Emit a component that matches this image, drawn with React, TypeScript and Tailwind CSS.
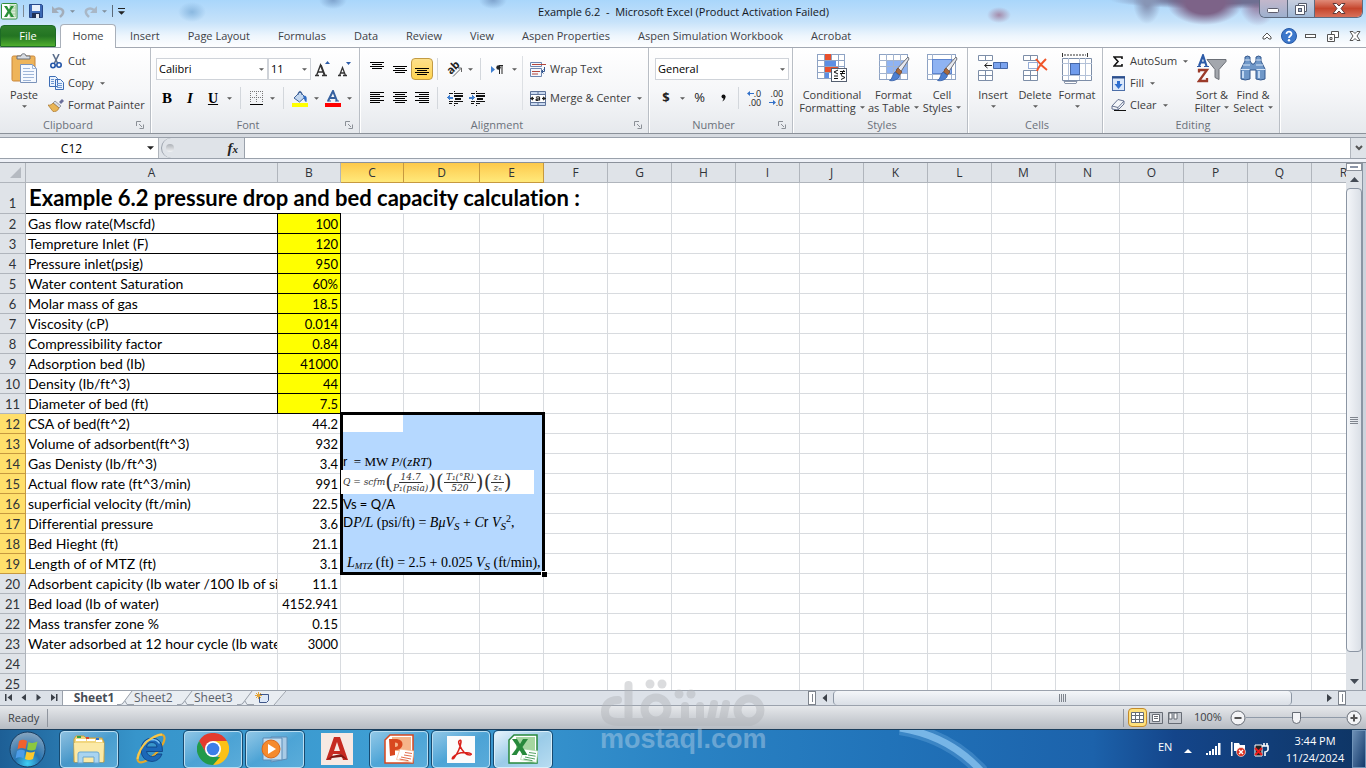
import React from 'react';
import type { ReactNode } from 'react';

const UI = "font-['Open_Sans','Noto_Sans',sans-serif]";
const CELL = "font-['Lato',sans-serif] [font-variant-ligatures:none]";
const SERIF = "font-['Liberation_Serif',serif]";

function Caret({ big = false }: { big?: boolean }) {
  return (
    <svg width={big ? 7 : 5} height={big ? 4 : 3} viewBox="0 0 6 3" className="shrink-0" aria-hidden="true">
      <path d="M0 0H6L3 3Z" fill={big ? '#222' : '#5b5b5b'} />
    </svg>
  );
}

function Launcher() {
  return (
    <svg width="8" height="8" viewBox="0 0 8 8" aria-hidden="true">
      <path d="M.5 5V.5H5M3 3l3 3M7.500 3.500v4h-4" fill="none" stroke="#8b9097" />
    </svg>
  );
}

function Group({ label, width, launcher = false, children }: { label: string; width: string; launcher?: boolean; children: ReactNode }) {
  return (
    <section aria-label={label} className={`${width} flex shrink-0 flex-col border-r border-[#b9bec5] shadow-[1px_0_0_#fff]`}>
      <div className="flex h-[69px]">{children}</div>
      <div className="flex h-4 items-center pr-1.5">
        <span className={`flex-1 text-center text-[#6b717a] ${launcher ? '' : 'pl-2.5'}`}>{label}</span>
        {launcher && (
          <button aria-label={`${label} options`}>
            <Launcher />
          </button>
        )}
      </div>
    </section>
  );
}

function IconButton({ label, className = 'w-5', children }: { label: string; className?: string; children: ReactNode }) {
  return (
    <button aria-label={label} className={`flex h-[22px] shrink-0 items-center justify-center ${className}`}>
      {children}
    </button>
  );
}

function Rule() {
  return <span className="h-[22px] w-px shrink-0 bg-[#d3d7dc]" />;
}

function Combo({ label, value, className }: { label: string; value: string; className: string }) {
  return (
    <div className={`relative shrink-0 ${className}`}>
      <select aria-label={label} defaultValue={value} className="h-[22px] w-full appearance-none border border-[#cfd3d9] bg-white pl-0.5 text-[11px] text-black">
        <option>{value}</option>
      </select>
      <span className="pointer-events-none absolute right-1 top-2.5">
        <Caret />
      </span>
    </div>
  );
}

function Lines({ rows }: { rows: number[][] }) {
  return (
    <svg width="16" height="14" viewBox="0 0 16 14" shapeRendering="crispEdges" aria-hidden="true">
      {rows.map(([x, y, w]) => (
        <rect key={y} x={x} y={y} width={w} height="1" fill="#000" />
      ))}
    </svg>
  );
}

const alignLeft = [[1, 1, 14], [1, 3, 10], [1, 5, 14], [1, 7, 10], [1, 9, 14], [1, 11, 10]];
const alignCenter = [[1, 1, 14], [3, 3, 10], [1, 5, 14], [3, 7, 10], [1, 9, 14], [3, 11, 10]];
const alignRight = [[1, 1, 14], [5, 3, 10], [1, 5, 14], [5, 7, 10], [1, 9, 14], [5, 11, 10]];
const alignTop = [[1, 0, 14], [3, 2, 10], [1, 4, 14], [3, 6, 10]];
const alignMiddle = [[1, 4, 14], [3, 6, 10], [1, 8, 14], [3, 10, 10]];
const alignBottom = [[1, 6, 14], [3, 8, 10], [1, 10, 14], [3, 12, 10]];

function Indent({ flip = false }: { flip?: boolean }) {
  return (
    <svg width="17" height="15" viewBox="0 0 17 15" shapeRendering="crispEdges" aria-hidden="true">
      <g fill="#111">
        <rect x="7" y="0" width="1" height="1" />
        <rect x="2" y="2" width="4" height="1" />
        <rect x="7" y="2" width="9" height="1" />
        <rect x="7" y="4" width="9" height="2" />
        <rect x="8" y="7" width="6" height="2" />
        <rect x="2" y="10" width="4" height="1" />
        <rect x="7" y="10" width="9" height="1" />
        <rect x="2" y="12" width="3" height="1" />
        <rect x="7" y="12" width="4" height="1" />
        <rect x="7" y="14" width="1" height="1" />
      </g>
      <path d={flip ? 'M0 5.500h3v-2L6 6.500 3 9.500v-2H0z' : 'M6 5.500H3v-2L0 6.500l3 3v-2h3z'} fill="#3f7fd0" />
    </svg>
  );
}

function DecimalArrow({ right = false }: { right?: boolean }) {
  return (
    <svg width="7" height="5" viewBox="0 0 7 5" aria-hidden="true">
      <path d={right ? 'M0 2h4V0l3 2.500L4 5V3H0z' : 'M7 2H3V0L0 2.500 3 5V3h4z'} fill="#3270c8" />
    </svg>
  );
}

function ExcelIcon() {
  return (
    <svg width="17" height="17" viewBox="0 0 17 17" aria-hidden="true">
      <rect x=".5" y=".5" width="15.500" height="15.500" rx="1" fill="#fff" stroke="#2f8d3a" />
      <rect x="9" y="2" width="5.500" height="12" fill="#d7ecd5" stroke="#82bb82" strokeWidth=".6" />
      <path d="M9 5h5.500M9 8h5.500M9 11h5.500" stroke="#82bb82" strokeWidth=".6" />
      <path d="M3 3h3l2 3.500L10 3h3L9.500 8.200 13 14h-3L8 10.300 6 14H3l3.500-5.800z" fill="#2a9038" />
    </svg>
  );
}

function Header() {
  return (
    <header className="relative shrink-0 bg-[radial-gradient(ellipse_14px_10px_at_192px_12px,#8ab8e0_0,transparent_100%),radial-gradient(ellipse_14px_9px_at_493px_0px,#7ea3cd_0,transparent_100%),radial-gradient(ellipse_14px_9px_at_333px_0px,#7ea3cd_0,transparent_100%),radial-gradient(ellipse_12px_8px_at_999px_15px,#a58cab_0,transparent_100%),radial-gradient(ellipse_38px_22px_at_1205px_3px,#7d6388_50%,transparent_100%),radial-gradient(ellipse_14px_22px_at_1147px_2px,#8795b5_20%,transparent_100%),radial-gradient(ellipse_110px_9px_at_1220px_0px,#6f6f92_40%,transparent_100%),radial-gradient(ellipse_20px_26px_at_1258px_0px,#94799d_20%,transparent_100%),linear-gradient(180deg,#a9d6fb_0,#c6e2fa_45%,#eef6fd_75%,#fff_100%)]">
      <div className="flex h-[25px] items-start">
        <div className="flex h-[22px] w-[132px] shrink-0 items-center gap-[5px] pl-px">
          <ExcelIcon />
          <span className="h-3 w-px bg-[#7c8894]" />
          <button aria-label="Save">
            <svg width="14" height="14" viewBox="0 0 14 14" aria-hidden="true">
              <path d="M.5.500h12l1 1v12H.5z" fill="#3c69b5" stroke="#28498a" />
              <rect x="3" y="1" width="8" height="6" fill="#e9f1fb" />
              <rect x="3" y="9" width="8" height="5" fill="#1f3156" />
              <rect x="7" y="10" width="3" height="4" fill="#e5ebf3" />
            </svg>
          </button>
          <button aria-label="Undo" className="ml-1 flex items-center gap-1">
            <svg width="14" height="13" viewBox="0 0 14 13" aria-hidden="true">
              <path d="M3 5c4-3 9-1 8 3-.5 2-2 3-3 4" fill="none" stroke="#a3adb9" strokeWidth="2.500" />
              <path d="M0 1v7h7z" fill="#a3adb9" />
            </svg>
            <span className="opacity-60"><Caret /></span>
          </button>
          <button aria-label="Redo" className="ml-1 flex items-center gap-1">
            <svg width="14" height="13" viewBox="0 0 14 13" aria-hidden="true">
              <path d="M10 5c-4-3-9-1-8 3 .5 2 2 3 3 4" fill="none" stroke="#a9b7c6" strokeWidth="2.500" />
              <path d="M13 1v7H6z" fill="#a9b7c6" />
            </svg>
            <span className="opacity-60"><Caret /></span>
          </button>
          <span className="h-3 w-px shrink-0 bg-[#5c6b7a]" />
          <button aria-label="Customize toolbar" className="flex shrink-0 flex-col items-center gap-0.5">
            <span className="h-px w-[7px] bg-[#222]" />
            <Caret big />
          </button>
        </div>
        <h1 className="flex-1 pr-6 pt-1 text-center text-[11px] leading-4 text-[#14181d]">Example 6.2&nbsp; -&nbsp; Microsoft Excel (Product Activation Failed)</h1>
        <div className="mr-[3px] flex h-[18px] shrink-0 overflow-hidden rounded-b-md border border-t-0 border-[#5d6b80]">
          <button aria-label="Minimize" className="flex w-7 items-center justify-center border-r border-[#5d6b80] bg-linear-to-b from-[#c3b7cb] to-[#9db0ce] pt-1">
            <svg width="13" height="5" aria-hidden="true"><rect x=".5" y=".5" width="11" height="4" rx="1" fill="#fff" stroke="#5c5c6c" /></svg>
          </button>
          <button aria-label="Restore" className="flex w-[27px] items-center justify-center border-r border-[#5d6b80] bg-linear-to-b from-[#c8cfdf] to-[#9fb8d6]">
            <svg width="13" height="12" viewBox="0 0 13 12" aria-hidden="true">
              <path d="M3.500 .5h8v8h-8z" fill="#fff" stroke="#555b6b" />
              <path d="M.5 2.500h9v9h-9z" fill="#fff" stroke="#555b6b" />
              <rect x="3.500" y="5.500" width="3" height="3" fill="#9fb1ca" stroke="#555b6b" />
            </svg>
          </button>
          <button aria-label="Close" className="flex w-[47px] items-center justify-center bg-linear-to-b from-[#e08a78] via-[#c5452c] to-[#d8705a]">
            <svg width="14" height="11" viewBox="0 0 14 11" aria-hidden="true">
              <path d="M1 .5h3.500L7 3l2.500-2.500H13L9 5.500l4 5H9.500L7 8l-2.500 2.500H1l4-5z" fill="#fff" stroke="#5f3a3a" />
            </svg>
          </button>
        </div>
      </div>
      <nav aria-label="Ribbon tabs" className="flex h-[23px] items-end border-b border-[#a3a9b3] text-[#3e4247]">
        <button className="h-[22px] w-14 rounded-t border border-[#1d6b26] bg-linear-to-b from-[#2f7f2c] via-[#237422] to-[#4fae2e] text-white">File</button>
        <button className="ml-1 -mb-px h-6 w-14 rounded-t border border-b-0 border-[#a9b0ba] bg-white">Home</button>
        {['Insert', 'Page Layout', 'Formulas', 'Data', 'Review', 'View', 'Aspen Properties', 'Aspen Simulation Workbook', 'Acrobat'].map((t) => (
          <button key={t} className="h-[22px] px-3.5">{t}</button>
        ))}
        <div className="ml-auto flex">
          <IconButton label="Minimize ribbon" className="w-[22px]">
            <svg width="10" height="8" viewBox="0 0 10 8" aria-hidden="true"><path d="M1 5l4-4 4 4v2H7L5 5 3 7H1z" fill="#fff" stroke="#555" /></svg>
          </IconButton>
          <IconButton label="Help" className="w-[22px]">
            <svg width="16" height="16" viewBox="0 0 16 16" aria-hidden="true">
              <circle cx="8" cy="8" r="7.500" fill="#3c78cc" stroke="#2759a5" />
              <path d="M5.500 6c0-3.500 5.500-3 5 .2C10.200 8 8 8 8 10" fill="none" stroke="#fff" strokeWidth="1.800" />
              <circle cx="8" cy="12.300" r="1.200" fill="#fff" />
            </svg>
          </IconButton>
          <IconButton label="Minimize workbook" className="w-[22px]">
            <svg width="12" height="5" aria-hidden="true"><rect x=".5" y=".5" width="10" height="3" fill="#fff" stroke="#555" /></svg>
          </IconButton>
          <IconButton label="Restore workbook" className="w-[22px]">
            <svg width="12" height="11" viewBox="0 0 12 11" aria-hidden="true">
              <path d="M4.500.5h7v6h-7z" fill="#fff" stroke="#555" />
              <path d="M.5 3.500h7v7h-7z" fill="#fff" stroke="#555" />
              <path d="M3 6.500h2v2H3z" fill="none" stroke="#555" />
            </svg>
          </IconButton>
          <IconButton label="Close workbook" className="w-[22px]">
            <svg width="12" height="10" viewBox="0 0 12 10" aria-hidden="true">
              <path d="M1 .5h3l2 2 2-2h3L8 5l3 4.500H8l-2-2-2 2H1L4 5z" fill="#fff" stroke="#555" />
            </svg>
          </IconButton>
        </div>
      </nav>
    </header>
  );
}

function TableBrush({ inner }: { inner: boolean }) {
  return (
    <svg width="32" height="30" viewBox="0 0 32 30" aria-hidden="true">
      <rect x="1.500" y="1.500" width="28" height="25" fill="#fff" stroke="#8ea3c4" />
      <path d={inner ? 'M1 7.500h28M1 13.500h28M1 20.500h28M8.500 1v25M15.500 1v25M22.500 1v25' : 'M1 6.500h28M1 21.500h28M6.500 1v25M25.500 1v25'} stroke="#a3b4cf" fill="none" />
      {inner ? (
        <path d="M9 8h6v5H9zM16 8h6v5h-6zM23 8h6v5h-6zM9 14h6v6H9zM16 14h6v6h-6zM23 14h6v6h-6zM16 21h6v5h-6z" fill="#8fb3f2" />
      ) : (
        <rect x="6.500" y="6.500" width="19" height="14" fill="#8fb3f2" stroke="#5f86cf" />
      )}
      <path d="M30 4l1 2-9 14-4-3z" fill="#e6e8ee" stroke="#6d7078" />
      <path d="M20 15l4 4-2.500 3-4-3z" fill="#a9683a" stroke="#734422" strokeWidth=".7" />
      <path d="M17 19l4.500 3.500c-1 4-6 6-10 5 3-1 2.500-6 5.500-8.500z" fill="#4d7fd0" stroke="#2d569d" strokeWidth=".7" />
    </svg>
  );
}

function BigButton({ icon, lines, className, caretBelow = false }: { icon: ReactNode; lines: string[]; className: string; caretBelow?: boolean }) {
  return (
    <button className={`flex shrink-0 flex-col items-center pt-1 leading-[13px] ${className}`}>
      <span className="mb-1 flex h-8 items-center">{icon}</span>
      {lines.map((l, i) => (
        <span key={l} className="flex items-center gap-1 whitespace-nowrap">
          {l}
          {!caretBelow && i === lines.length - 1 && <Caret />}
        </span>
      ))}
      {caretBelow && <span className="mt-1"><Caret /></span>}
    </button>
  );
}

function SmallButton({ icon, label, caret = false }: { icon: ReactNode; label: string; caret?: boolean }) {
  return (
    <button className="flex h-[22px] items-center gap-1 whitespace-nowrap">
      <span className="flex w-4 shrink-0 justify-center">{icon}</span>
      {label}
      {caret && <span className="ml-0.5"><Caret /></span>}
    </button>
  );
}

function Ribbon() {
  return (
    <div className="flex h-[86px] shrink-0 overflow-hidden border-b border-[#8b9199] bg-linear-to-b from-white via-[#f6f7f9] to-[#e6e9ed] text-[#3b3b3b]">
      <Group label="Clipboard" width="w-[151px]" launcher>
        <BigButton
          className="w-12"
          lines={['Paste']}
          caretBelow
          icon={
            <svg width="27" height="31" viewBox="0 0 27 31" aria-hidden="true">
              <rect x="1" y="3" width="23" height="25" rx="1.500" fill="#eeb45a" stroke="#c9863a" />
              <path d="M6 6V3h4c0-3 5-3 5 0h4v3z" fill="#d9dde3" stroke="#6b7078" />
              <path d="M9.500 11.500h12l4 4v14h-16z" fill="#f5f9ff" stroke="#7a93ba" />
              <path d="M21.500 11.500v4h4M12 18.500h11M12 21.500h11M12 24.500h11M12 27.500h8M12 15.500h7" fill="none" stroke="#9fb6d8" />
            </svg>
          }
        />
        <div className="flex flex-col pt-0.5">
          <SmallButton
            label="Cut"
            icon={
              <svg width="12" height="15" viewBox="0 0 12 15" aria-hidden="true">
                <path d="M3 0l4.500 9M9 0L4.500 9" stroke="#5d6f8c" strokeWidth="1.600" fill="none" />
                <circle cx="3" cy="11.500" r="2.200" fill="none" stroke="#2456a8" strokeWidth="1.600" />
                <circle cx="9" cy="11" r="2.200" fill="none" stroke="#2456a8" strokeWidth="1.600" />
              </svg>
            }
          />
          <SmallButton
            label="Copy"
            caret
            icon={
              <svg width="15" height="14" viewBox="0 0 15 14" aria-hidden="true">
                <path d="M.5 .5h6l2 2v8h-8zM6.500 3.500h5l3 3v7h-8z" fill="#eaf2fd" stroke="#3d6db5" />
                <path d="M2 3.500h3M2 5.500h3M2 7.500h3M8 7.500h5M8 9.500h5M8 11.500h5" stroke="#6e97d2" />
              </svg>
            }
          />
          <SmallButton
            label="Format Painter"
            icon={
              <svg width="16" height="13" viewBox="0 0 16 13" aria-hidden="true">
                <path d="M11 3l3-3 2 2-3 3z" fill="#6a6f9a" />
                <path d="M7 2l6 5-2 2-6-5z" fill="#d8dce4" stroke="#777c86" strokeWidth=".7" />
                <path d="M5 4l6 5c-1 3-4 4-6 3.500L0 6c2 .5 4-.5 5-2z" fill="#e9b556" stroke="#a8742a" strokeWidth=".7" />
              </svg>
            }
          />
        </div>
      </Group>

      <Group label="Font" width="w-[209px]" launcher>
        <div className="flex flex-col gap-[7px] pl-[5px] pt-2.5">
          <div className="flex">
            <Combo label="Font name" value="Calibri" className="w-28" />
            <Combo label="Font size" value="11" className="w-[43px]" />
            <IconButton label="Grow font" className="w-[22px]">
              <svg width="15" height="16" viewBox="0 0 15 16" aria-hidden="true">
                <path d="M10 3l2.500-3L15 3z" fill="#2b5ba8" />
                <path d="M0 14.500h4M7 14.500h5M1.500 14.500L5.500 4l4 10.500M3 11h5" stroke="#333" strokeWidth="1.400" fill="none" />
                <path d="M6 4l4 10.500" stroke="#333" strokeWidth="1.500" />
              </svg>
            </IconButton>
            <IconButton label="Shrink font" className="w-[22px]">
              <svg width="13" height="16" viewBox="0 0 13 16" aria-hidden="true">
                <path d="M8 1h5l-2.500 3z" fill="#2b5ba8" />
                <path d="M0 14.500h3M5 14.500h4M1.500 14.500l3-8 3 8M2.500 12h4" stroke="#333" strokeWidth="1.300" fill="none" />
              </svg>
            </IconButton>
          </div>
          <div className={`flex items-center text-black ${UI}`}>
            <IconButton label="Bold" className={`w-[22px] text-[15px] font-bold ${SERIF}`}>B</IconButton>
            <IconButton label="Italic" className={`w-6 text-[15px] font-bold italic ${SERIF}`}>I</IconButton>
            <IconButton label="Underline" className={`w-[22px] text-[14px] font-bold underline ${SERIF}`}>U</IconButton>
            <IconButton label="Underline style" className="mr-1.5 w-2.5"><Caret /></IconButton>
            <Rule />
            <IconButton label="Borders" className="ml-1 w-[22px]">
              <svg width="13" height="14" viewBox="0 0 13 14" aria-hidden="true">
                <path d="M.5 0v12M6.500 0v12M12.500 0v12M0 .5h13M0 6.500h13" stroke="#777" strokeDasharray="1 1" />
                <path d="M0 13.500h13" stroke="#000" />
              </svg>
            </IconButton>
            <IconButton label="Border style" className="mr-1.5 w-2.5"><Caret /></IconButton>
            <Rule />
            <IconButton label="Fill color" className="ml-1.5 w-5">
              <svg width="17" height="17" viewBox="0 0 17 17" aria-hidden="true">
                <path d="M2 8l6-6 5 5-5.500 5z" fill="#c3d7ef" stroke="#3f6298" />
                <path d="M6 5c0-5 4-5 4 0" fill="none" stroke="#3f6298" />
                <path d="M11 6c4-1 4 2 3.500 6-2 0-2-3-3.500-6z" fill="#2f6cc4" />
                <rect y="13" width="16" height="4" fill="#ff0" />
              </svg>
            </IconButton>
            <IconButton label="Fill color list" className="w-3"><Caret /></IconButton>
            <IconButton label="Font color" className="w-[22px]">
              <svg width="16" height="17" viewBox="0 0 16 17" aria-hidden="true">
                <path d="M3 11L8 1l4 10M5 8h5" fill="none" stroke="#35609f" strokeWidth="2" />
                <path d="M2 11h4M10 11h4" stroke="#35609f" />
                <rect y="13" width="16" height="4" fill="red" />
              </svg>
            </IconButton>
            <IconButton label="Font color list" className="w-2.5"><Caret /></IconButton>
          </div>
        </div>
      </Group>

      <Group label="Alignment" width="w-[289px]" launcher>
        <div className="flex flex-col gap-[7px] pl-[5px] pt-2.5">
          <div className="flex w-[157px]">
            <IconButton label="Top align" className="w-[23px]"><Lines rows={alignTop} /></IconButton>
            <IconButton label="Middle align" className="w-[23px]"><Lines rows={alignMiddle} /></IconButton>
            <IconButton label="Bottom align" className="w-[22px] rounded-sm border border-[#c29b44] bg-linear-to-b from-[#fde08a] to-[#ffd44d]"><Lines rows={alignBottom} /></IconButton>
            <span className="w-1" />
            <Rule />
            <IconButton label="Orientation" className="ml-1.5 w-[22px]">
              <svg width="17" height="16" viewBox="0 0 17 16" aria-hidden="true">
                <text x="1" y="11" transform="rotate(-45 6 9)" fontFamily="Open Sans" fontWeight="700" fontSize="11" fill="#222">ab</text>
                <path d="M6 15.500l8-8M14.500 11V7H11" fill="none" stroke="#666" />
              </svg>
            </IconButton>
            <IconButton label="Orientation list" className="mr-1.5 w-2"><Caret /></IconButton>
            <Rule />
            <IconButton label="Text direction" className="ml-1 w-6">
              <svg width="13" height="11" viewBox="0 0 13 11" aria-hidden="true">
                <path d="M0 2l4 3.500L0 9z" fill="#3f7fd0" />
                <path d="M12 1.500H8M8.500 1v9M11 1v9" stroke="#222" fill="none" />
                <circle cx="7.500" cy="3.500" r="2.200" fill="#222" />
              </svg>
            </IconButton>
            <IconButton label="Text direction list" className="w-2.5"><Caret /></IconButton>
          </div>
          <div className="flex">
            <IconButton label="Align left" className="w-[23px]"><Lines rows={alignLeft} /></IconButton>
            <IconButton label="Center" className="w-[23px]"><Lines rows={alignCenter} /></IconButton>
            <IconButton label="Align right" className="w-[22px]"><Lines rows={alignRight} /></IconButton>
            <span className="w-1" />
            <Rule />
            <IconButton label="Decrease indent" className="ml-1.5 w-[22px]"><Indent /></IconButton>
            <IconButton label="Increase indent" className="w-[22px]"><Indent flip /></IconButton>
          </div>
        </div>
        <span className="mt-2 h-[54px] w-px bg-[#dde0e4]" />
        <div className="flex flex-col gap-[7px] pl-[7px] pt-2.5">
          <SmallButton
            label="Wrap Text"
            icon={
              <svg width="16" height="15" viewBox="0 0 16 15" aria-hidden="true">
                <path d="M.5 .5h11v4H.5zM.5 6.500h11v8H.5z" fill="#f5f8fd" stroke="#6d86b0" />
                <path d="M2 2.500h14M2 9.500h8M2 12h6" stroke="#b5473c" />
                <path d="M14.500 5v4.500H12M13.500 7.500l-2 2 2 2" stroke="#33568f" fill="none" />
              </svg>
            }
          />
          <SmallButton
            label="Merge &amp; Center"
            caret
            icon={
              <svg width="16" height="15" viewBox="0 0 16 15" aria-hidden="true">
                <path d="M.5 .5h15v14H.5z" fill="#c9d9f0" stroke="#5d7299" />
                <rect x="1" y="4" width="14" height="7" fill="#fff" />
                <path d="M0 3.500h16M0 11.500h16M8 0v3M8 12v3" stroke="#5d7299" />
                <path d="M0 7.500h4M3 6l-2 1.500L3 9M16 7.500h-4M13 6l2 1.500L13 9M6 6.500c1-1 3.500-1 3.500 0v3M9 8c-4-.5-4 2-.5 1.300" fill="none" stroke="#222" strokeWidth="1.200" />
              </svg>
            }
          />
        </div>
      </Group>

      <Group label="Number" width="w-36" launcher>
        <div className="flex flex-col gap-[7px] pl-1.5 pt-2.5">
          <Combo label="Number format" value="General" className="w-[134px]" />
          <div className="flex items-center text-[13px] text-[#222]">
            <IconButton label="Accounting format" className="w-[22px] font-bold">$</IconButton>
            <IconButton label="Accounting list" className="w-2.5"><Caret /></IconButton>
            <IconButton label="Percent style" className="w-[25px]">%</IconButton>
            <IconButton label="Comma style" className={`w-[22px] ${UI}`}>
              <svg width="5" height="8" viewBox="0 0 5 8" aria-hidden="true"><circle cx="2.500" cy="2.500" r="2" fill="#111" /><path d="M4.500 2.500C4.500 5 3 7 1 7.500 2.500 6 2.500 5 2.500 3z" fill="#111" /></svg>
            </IconButton>
            <span className="w-1" />
            <Rule />
            <IconButton label="Increase decimal" className="ml-1 w-[22px] text-[9px] leading-[9px]">
              <span className="flex flex-col items-end"><span className="flex items-center"><DecimalArrow />.0</span><span>.00</span></span>
            </IconButton>
            <IconButton label="Decrease decimal" className="w-[22px] text-[9px] leading-[9px]">
              <span className="flex flex-col items-end"><span>.00</span><span className="flex items-center"><DecimalArrow right />.0</span></span>
            </IconButton>
          </div>
        </div>
      </Group>

      <Group label="Styles" width="w-[175px]">
        <div className="flex pl-1.5">
          <BigButton
            className="w-[66px]"
            lines={['Conditional', 'Formatting']}
            icon={
              <svg width="32" height="30" viewBox="0 0 32 30" aria-hidden="true">
                <rect x="1.500" y="1.500" width="27" height="24" fill="#fff" stroke="#8ea3c4" />
                <path d="M1 7.500h27M1 13.500h27M1 19.500h27M8.500 1v24M15.500 1v24M22.500 1v24" stroke="#8ea3c4" />
                <path d="M9 1h6v6H9z" fill="#e8502c" />
                <path d="M9 8h11v5H9z" fill="#5d8fe4" />
                <path d="M9 14h13v5H9z" fill="#e8502c" />
                <path d="M9 20h4v5H9z" fill="#5d8fe4" />
                <rect x="15.500" y="15.500" width="15" height="13" fill="#fff" stroke="#555f70" />
                <path d="M22 17l-4 2 4 2M18 23h4M18 25.500h4M24 18.500h5M24 20.500h5M28 17l-3 5M25 22.500l4 2-4 2" fill="none" stroke="#111" />
              </svg>
            }
          />
          <BigButton className="w-[57px]" lines={['Format', 'as Table']} icon={<TableBrush inner />} />
          <BigButton className="w-10" lines={['Cell', 'Styles']} icon={<TableBrush inner={false} />} />
        </div>
      </Group>

      <Group label="Cells" width="w-[135px]">
        <div className="flex pl-1">
          <BigButton
            className="w-[42px]"
            lines={['Insert']}
            caretBelow
            icon={
              <svg width="32" height="28" viewBox="0 0 32 28" aria-hidden="true">
                <path d="M1.500 1.500h14v5h-14zM8.500 1v5M1.500 16.500h14v10h-14zM8.500 16v10M1 21.500h15" fill="#fff" stroke="#7d8ea8" />
                <path d="M16.500 8.500h14v6h-14z" fill="#7ba3ee" stroke="#4668a8" />
                <path d="M23.500 8v6" stroke="#4668a8" />
                <path d="M15 11.500H8M10.500 9L7.500 11.500l3 2.500" stroke="#222" fill="none" />
              </svg>
            }
          />
          <BigButton
            className="w-[42px]"
            lines={['Delete']}
            caretBelow
            icon={
              <svg width="26" height="28" viewBox="0 0 26 28" aria-hidden="true">
                <path d="M1.500 1.500h14v5h-14zM8.500 1v5M1.500 16.500h14v10h-14zM8.500 16v10M1 21.500h15" fill="#fff" stroke="#7d8ea8" />
                <path d="M6.500 8.500h9v6h-9z" fill="#fff" stroke="#2f5db0" strokeDasharray="1 1" />
                <path d="M14 5c3 4 7 8 11 11M24 5c-4 4-8 8-9 12" stroke="#f0562a" strokeWidth="2" fill="none" />
              </svg>
            }
          />
          <BigButton
            className="w-[42px]"
            lines={['Format']}
            caretBelow
            icon={
              <svg width="32" height="31" viewBox="0 0 32 31" aria-hidden="true">
                <path d="M1.500 0v4M26.500 0v4" stroke="#333" />
                <path d="M3 2h22" stroke="#333" strokeDasharray="2 1" />
                <path d="M1.500 5.500h29v22h-29z" fill="#fff" stroke="#7d8ea8" />
                <path d="M1 10.500h30M1 22.500h30M7.500 5v22M24.500 5v22M18.500 5v22" stroke="#b3c1d8" />
                <rect x="9.500" y="10.500" width="9" height="11" fill="#6f9bec" stroke="#4668a8" />
                <path d="M3 28.500h13l-1 2H4z" fill="#fff" stroke="#8a96ab" />
              </svg>
            }
          />
        </div>
      </Group>

      <Group label="Editing" width="w-[177px]">
        <div className="flex w-[84px] shrink-0 flex-col pl-[7px] pt-0.5">
          <SmallButton
            label="AutoSum"
            caret
            icon={<svg width="10" height="11" viewBox="0 0 10 11" aria-hidden="true"><path d="M9 3V1H1l4 4.500L1 10h8V8" fill="none" stroke="#111" strokeWidth="1.600" /></svg>}
          />
          <SmallButton
            label="Fill"
            caret
            icon={
              <svg width="13" height="15" viewBox="0 0 13 15" aria-hidden="true">
                <rect x=".5" y=".5" width="12" height="14" fill="#dbe8fa" stroke="#4d6fa8" />
                <path d="M0 1.500h13" stroke="#2d4f8b" strokeWidth="2" />
                <path d="M5 5h3v3h2.500l-4 5-4-5H5z" fill="#2f6fd0" />
              </svg>
            }
          />
          <SmallButton
            label="Clear"
            caret
            icon={
              <svg width="15" height="12" viewBox="0 0 15 12" aria-hidden="true">
                <path d="M1 7l6-6.500 6 1.500v3L7 11l-6-1z" fill="#f4f6fa" stroke="#667390" />
                <path d="M1 7l6 1.500L13 2M7 8.500V11" fill="none" stroke="#667390" />
                <path d="M3 11.500h12" stroke="#111" />
              </svg>
            }
          />
        </div>
        <BigButton
          className="w-[46px] pl-1"
          lines={['Sort &', 'Filter']}
          icon={
            <svg width="30" height="29" viewBox="0 0 30 29" aria-hidden="true">
              <path d="M10 5.500h19v2l-7 8v10l-4-2v-8z" fill="#a3a7ad" stroke="#6b6f76" />
              <path d="M2 12L6 1.500l3.500 10.500M3.500 8.500h5" fill="none" stroke="#2d5ca8" strokeWidth="2.200" />
              <path d="M0 12.500h4M7 12.500h5" stroke="#2d5ca8" />
              <path d="M2 18.500V16h8L2 27h8v-3" fill="none" stroke="#9b3b2a" strokeWidth="2.300" />
            </svg>
          }
        />
        <BigButton
          className="w-10"
          lines={['Find &', 'Select']}
          icon={
            <svg width="28" height="26" viewBox="0 0 28 26" aria-hidden="true">
              <path d="M6 2q2.500-2 5 0v4l2 3h2l2-3V2q2.500-2 5 0v4l4 8v10q-4 2-9 0v-9h-6v9q-5 2-9 0V14l4-8z" fill="#6f97c8" stroke="#35598e" />
              <path d="M6 5h5M17 5h5M4 10h7M17 10h7M1.500 14.500h9M17.500 14.500h9" stroke="#d5e4f6" />
              <path d="M4 16v7M20 16v7" stroke="#c3d8f2" strokeWidth="2" />
            </svg>
          }
        />
      </Group>
    </div>
  );
}

function FormulaBar() {
  return (
    <div className="shrink-0 bg-[#d6dae0] pt-[3px]">
      <div className="flex h-[22px] border-y border-[#9aa1ab] bg-[#dfe3e8]">
        <div className="flex w-[159px] shrink-0 items-center border-r border-[#b0b5bc] bg-white pr-1">
          <input aria-label="Name box" defaultValue="C12" className="h-5 min-w-0 flex-1 bg-transparent pr-1 text-center text-[12px] text-black" />
          <button aria-label="Name list"><Caret big /></button>
        </div>
        <div className="ml-0.5 flex w-[83px] shrink-0 items-center justify-between rounded-l-full border-l border-[#9aa1ab] pl-1 pr-1.5">
          <span className="size-2 rounded-full bg-linear-to-b from-[#aeb2b8] to-[#f1f3f5]" />
          <button aria-label="Insert function" className={`text-[15px] font-bold italic text-[#222] ${SERIF}`}>f<span className="text-[11px]">x</span></button>
        </div>
        <input aria-label="Formula" className="min-w-0 flex-1 border-l border-[#9aa1ab] bg-white px-1 text-[12px]" />
        <button aria-label="Expand formula bar" className="flex w-4 shrink-0 items-center justify-center border-l border-[#b0b5bc] bg-[#dfe3e8]">
          <svg width="8" height="6" viewBox="0 0 8 6" aria-hidden="true"><path d="M1 1l3 3 3-3" fill="none" stroke="#555" strokeWidth="2" /></svg>
        </button>
      </div>
      <div className="h-[3px] bg-[#eef1f7]" />
    </div>
  );
}

const columns = ['A', 'B', 'C', 'D', 'E', 'F', 'G', 'H', 'I', 'J', 'K', 'L', 'M', 'N', 'O', 'P', 'Q', 'R'];
const selectedColumns = ['C', 'D', 'E'];

const data: [string, string][] = [
  ['Gas flow rate(Mscfd)', '100'],
  ['Tempreture Inlet (F)', '120'],
  ['Pressure inlet(psig)', '950'],
  ['Water content Saturation', '60%'],
  ['Molar mass of gas', '18.5'],
  ['Viscosity (cP)', '0.014'],
  ['Compressibility factor', '0.84'],
  ['Adsorption bed (Ib)', '41000'],
  ['Density (Ib/ft^3)', '44'],
  ['Diameter of bed (ft)', '7.5'],
  ['CSA of bed(ft^2)', '44.2'],
  ['Volume of adsorbent(ft^3)', '932'],
  ['Gas Denisty (Ib/ft^3)', '3.4'],
  ['Actual flow rate (ft^3/min)', '991'],
  ['superficial velocity (ft/min)', '22.5'],
  ['Differential pressure', '3.6'],
  ['Bed Hieght (ft)', '21.1'],
  ['Length of of MTZ (ft)', '3.1'],
  ['Adsorbent capicity (Ib water /100 Ib of silica)', '11.1'],
  ['Bed load (Ib of water)', '4152.941'],
  ['Mass transfer zone %', '0.15'],
  ['Water adsorbed at 12 hour cycle (Ib water)', '3000'],
  ['', ''],
  ['', ''],
];

function Fraction({ top, bottom }: { top: ReactNode; bottom: ReactNode }) {
  return (
    <span className="flex items-center">
      <span className="text-[20px] font-normal not-italic leading-5">(</span>
      <span className="flex flex-col items-center leading-[10px]">
        <span className="border-b border-[#333] px-0.5">{top}</span>
        <span>{bottom}</span>
      </span>
      <span className="text-[20px] font-normal not-italic leading-5">)</span>
    </span>
  );
}

function Selection() {
  return (
    <div className={`absolute -left-px -top-0.5 z-10 flex h-[163px] w-[205px] flex-col border-[3px] border-black bg-[#b5d8ff] text-left text-[14px] leading-4 text-black ${SERIF}`}>
      <div className="h-[17px] w-[60px] shrink-0 bg-white" />
      <div className="mt-[22px] h-4 whitespace-pre text-[13px]"><span className="font-['Liberation_Sans',sans-serif]">r</span>  = MW <i>P</i>/(<i>zRT</i>)</div>
      <div className="-ml-0.5 flex h-6 w-[193px] shrink-0 items-center whitespace-nowrap bg-white pl-0.5 font-['DejaVu_Serif',serif] text-[9px] italic text-[#333]">
        <span>Q = scfm</span>
        <Fraction top="14.7" bottom="P₁(psia)" />
        <Fraction top="T₁(°R)" bottom="520" />
        <Fraction top="z₁" bottom="zₙ" />
      </div>
      <div className={`h-5 text-[13px] leading-[21px] ${CELL}`}>Vs = Q/A</div>
      <div className="h-4 whitespace-nowrap"><span className="font-['Liberation_Sans',sans-serif]">D</span><i>P/L</i> (psi/ft) = <i>BμV</i><sub className="text-[11px] italic leading-none">S</sub> + <i>C</i><span className="font-['Liberation_Sans',sans-serif]">r</span> <i>V</i><sub className="text-[11px] italic leading-none">S</sub><sup className="text-[10px] leading-none">2</sup>,</div>
      <div className="mt-[25px] h-4 whitespace-nowrap pl-1"><i>L</i><sub className="text-[9px] italic leading-none">MTZ</sub> (ft) = 2.5 + 0.025 <i>V</i><sub className="text-[11px] italic leading-none">S</sub> (ft/min),</div>
      <span className="absolute -bottom-[5px] -right-[5px] size-[6px] border-l border-t border-white bg-black" />
    </div>
  );
}

function Sheet() {
  return (
    <div className="flex min-h-0 flex-1 border-t border-[#8b919b]">
      <div className="min-w-0 flex-1 overflow-hidden bg-white">
        <table className={`w-[1376px] table-fixed border-separate border-spacing-0 ${CELL}`}>
          <colgroup>
            <col className="w-[26px]" />
            <col className="w-[252px]" />
            <col className="w-[63px]" />
            <col className="w-[63px]" />
            <col className="w-[76px]" />
            <col className="w-16" />
            {columns.slice(5).map((c) => <col key={c} className="w-16" />)}
          </colgroup>
          <thead className={`text-[12px] text-[#2f3338] ${UI}`}>
            <tr>
              <th aria-label="Select all" className="h-5 border-b border-r border-[#b0b5bc] bg-[#dfe3e8] p-0">
                <svg width="12" height="12" className="ml-2.5" aria-hidden="true"><path d="M11 0v11H0z" fill="#b5bac1" /></svg>
              </th>
              {columns.map((c) => (
                <th
                  key={c}
                  scope="col"
                  className={`h-5 border-b border-r p-0 pt-px font-normal leading-[18px] ${selectedColumns.includes(c) ? 'border-[#c6993f] bg-linear-to-b from-[#fdc94b] to-[#ffe97a]' : 'border-[#b0b5bc] bg-[#dfe3e8]'}`}
                >
                  {c}
                </th>
              ))}
            </tr>
          </thead>
          <tbody className="text-[13px] text-black">
            <tr>
              <th scope="row" className="h-[31px] border-b border-r border-[#b0b5bc] bg-[#dfe3e8] p-0 align-bottom font-normal leading-5 text-[#2f3338]">1</th>
              <td colSpan={6} className="border-b border-r border-[#d8dbdf] p-0 pl-[3px] text-[22px] font-bold leading-[30px]">Example 6.2 pressure drop and bed capacity calculation :</td>
              {columns.slice(6).map((c) => <td key={c} className="border-b border-r border-[#d8dbdf]" />)}
            </tr>
            {data.map(([name, value], i) => {
              const row = i + 2;
              const given = row <= 11;
              const line = given ? 'border-black' : 'border-[#d8dbdf]';
              const selected = row >= 12 && row <= 19;
              return (
                <tr key={row}>
                  <th scope="row" className={`h-5 border-b border-r p-0 pt-px font-normal leading-[18px] text-[#2f3338] ${selected ? 'border-[#c6993f] bg-[#ffdf6b]' : 'border-[#b0b5bc] bg-[#dfe3e8]'}`}>{row}</th>
                  <td className={`overflow-hidden whitespace-nowrap border-b border-r p-0 pl-0.5 pt-px text-[14px] leading-[18px] ${line} ${row === 2 ? 'shadow-[0_-1px_0_#000]' : ''}`}>{name}</td>
                  <td className={`border-b border-r p-0 pr-0.5 pt-px text-right leading-[18px] ${line} ${given ? 'bg-[#ffff00]' : ''} ${row === 2 ? 'shadow-[0_-1px_0_#000]' : ''}`}>{value}</td>
                  {columns.slice(2).map((c) => (
                    <td key={c} className={`border-b border-r border-[#d8dbdf] p-0 ${row === 12 && c === 'C' ? 'relative' : ''}`}>
                      {row === 12 && c === 'C' && <Selection />}
                    </td>
                  ))}
                </tr>
              );
            })}
          </tbody>
        </table>
      </div>
      <div className="flex w-[17px] shrink-0 flex-col border-r border-[#8b95a3] bg-[#dfe3e8]">
        <button aria-label="Split window" className="flex h-2 shrink-0 items-center justify-center border border-[#8b919b] bg-white"><span className="h-0.5 w-2 bg-[#8b95a8]" /></button>
        <button aria-label="Scroll up" className="flex h-[17px] shrink-0 items-center justify-center">
          <svg width="9" height="5" aria-hidden="true"><path d="M4.500 0L9 5H0z" fill="#444b55" /></svg>
        </button>
        <div className="flex flex-1 flex-col items-center justify-center gap-px rounded-sm border border-[#8b95a3] bg-linear-to-r from-[#f4f6f9] to-[#dadfe6]">
          {[0, 1, 2, 3].map((n) => <span key={n} className="h-px w-2 bg-[#7f858e]" />)}
        </div>
        <button aria-label="Scroll down" className="mt-5 flex h-[18px] shrink-0 items-center justify-center">
          <svg width="9" height="5" aria-hidden="true"><path d="M0 0h9L4.500 5z" fill="#444b55" /></svg>
        </button>
      </div>
      <div className="w-[3px] shrink-0 bg-[#cdd3dc]" />
    </div>
  );
}

function NavIcon({ d }: { d: string }) {
  return <svg width="8" height="8" viewBox="0 0 8 8" aria-hidden="true"><path d={d} fill="#3b4048" /></svg>;
}

function Slant({ active = false }: { active?: boolean }) {
  return (
    <svg width="17" height="16" viewBox="0 0 17 16" className="shrink-0" aria-hidden="true">
      <path d="M6 14L15 0h2v14z" fill="#e9edf2" />
      <path d="M0 0h15L6 12q-1 1.500-3 1.500H0z" fill={active ? '#fff' : '#e9edf2'} />
      <path d="M15 0L6 12q-1 1.500-3 1.500H0M8 10l2 3.500h7" fill="none" stroke="#9aa1ab" />
    </svg>
  );
}

function SheetTabs() {
  return (
    <div className="flex h-4 shrink-0 border-y border-[#9ba2ad] bg-[#dce1e8]">
      <div className="flex w-[808px] min-w-0 text-[12px] leading-[14px] text-[#5b616b]">
        <div className="flex w-[63px] shrink-0 items-center justify-around border-r border-[#9aa1ab] px-px">
          <button aria-label="First sheet"><NavIcon d="M0 0h1.500v7H0zM7 0v7L2.500 3.500z" /></button>
          <button aria-label="Previous sheet"><NavIcon d="M6 0v7L1.500 3.500z" /></button>
          <button aria-label="Next sheet"><NavIcon d="M1.500 0v7L6 3.500z" /></button>
          <button aria-label="Last sheet"><NavIcon d="M1 0v7l4.500-3.500zM6 0h1.500v7H6z" /></button>
        </div>
        <button className="w-[54px] shrink-0 bg-white pl-2 font-bold text-[#474d57]">Sheet1</button>
        <Slant active />
        <button className="w-[43px] shrink-0 bg-[#e9edf2] text-left">Sheet2</button>
        <Slant />
        <button className="w-[43px] shrink-0 bg-[#e9edf2] text-left">Sheet3</button>
        <Slant />
        <button aria-label="Insert worksheet" className="flex w-[18px] shrink-0 items-center justify-center bg-[#e9edf2]">
          <svg width="16" height="12" viewBox="0 0 16 12" aria-hidden="true">
            <path d="M4.500 2.500h9v6l-2 2h-7z" fill="#dce7f7" stroke="#3f5688" />
            <path d="M3.500 0v7M0 3.500h7M1 1l5 5M6 1L1 6" stroke="#e3a53a" />
          </svg>
        </button>
        <svg width="16" height="14" className="shrink-0" aria-hidden="true"><path d="M0 0h15L3 14H0z" fill="#e9edf2" /><path d="M14 0L2 14" stroke="#9aa1ab" /></svg>
      </div>
      <div className="flex min-w-0 flex-1 items-stretch">
        <button aria-label="Resize tabs" className="flex w-2 shrink-0 items-center justify-center border border-[#7d838c] bg-white"><span className="h-2 w-px bg-[#7d838c]" /></button>
        <button aria-label="Scroll left" className="flex w-[17px] shrink-0 items-center justify-center"><NavIcon d="M6 0v8L1.500 4z" /></button>
        <div className="flex flex-1 items-center justify-center gap-px rounded-sm border border-y-0 border-[#8b95a3] bg-linear-to-b from-[#f4f6f9] to-[#dadfe6]">
          {[0, 1, 2, 3].map((n) => <span key={n} className="h-2 w-px bg-[#7f858e]" />)}
        </div>
        <button aria-label="Scroll right" className="ml-7 flex w-[18px] shrink-0 items-center justify-center"><NavIcon d="M2 0v8L7 4z" /></button>
        <button aria-label="Split columns" className="flex w-2 shrink-0 items-center justify-center border border-[#7d838c] bg-white"><span className="h-2 w-px bg-[#7d838c]" /></button>
        <span className="w-5 shrink-0" />
      </div>
    </div>
  );
}

function StatusBar() {
  return (
    <div className="flex h-[23px] shrink-0 items-center bg-linear-to-b from-[#e6e8eb] to-[#b7bcc3] text-[#3b3f45]">
      <span className="w-12 border-r border-[#8f959e] pl-2 leading-[18px]">Ready</span>
      <div className="ml-auto flex items-center">
        <span className="mr-1 h-[18px] w-px bg-[#8f959e]" />
        <button aria-label="Normal view" className="flex h-[19px] w-[19px] items-center justify-center rounded-sm border border-[#c28a2c] bg-[#ffe07a]">
          <svg width="13" height="11" viewBox="0 0 13 11" aria-hidden="true"><path d="M.5 .5h12v10H.5zM0 3.500h13M0 7.500h13M4.500 0v11M8.500 0v11" fill="#fff" stroke="#666c75" /></svg>
        </button>
        <button aria-label="Page layout view" className="ml-0.5">
          <svg width="14" height="12" viewBox="0 0 14 12" aria-hidden="true"><path d="M.5 .5h13v11H.5z" fill="#c5c9cf" stroke="#666c75" /><path d="M3.500 2.500h7v7h-7zM5 4.500h4M5 6.500h4" fill="#fff" stroke="#666c75" /></svg>
        </button>
        <button aria-label="Page break preview" className="ml-[5px]">
          <svg width="14" height="12" viewBox="0 0 14 12" aria-hidden="true"><path d="M.5 .5h13v11H.5z" fill="#c5c9cf" stroke="#666c75" /><path d="M1 1h3v6H1zM6 1h3v6H6z" fill="#fff" stroke="#666c75" /></svg>
        </button>
        <button className="ml-3 w-9 text-left">100%</button>
        <button aria-label="Zoom out">
          <svg width="16" height="16" viewBox="0 0 16 16" aria-hidden="true"><circle cx="8" cy="8" r="7" fill="#f3f4f6" stroke="#666c75" /><path d="M4.500 8h7" stroke="#555" strokeWidth="2" /></svg>
        </button>
        <input
          type="range"
          aria-label="Zoom"
          defaultValue={50}
          className="h-4 w-[100px] appearance-none bg-[linear-gradient(#8f9aa8,#8f9aa8)] bg-[length:100%_1px] bg-center bg-no-repeat [&::-webkit-slider-thumb]:h-3 [&::-webkit-slider-thumb]:w-[9px] [&::-webkit-slider-thumb]:appearance-none [&::-webkit-slider-thumb]:rounded-b-full [&::-webkit-slider-thumb]:border [&::-webkit-slider-thumb]:border-[#666c75] [&::-webkit-slider-thumb]:bg-[#f3f4f6]"
        />
        <button aria-label="Zoom in" className="mr-1">
          <svg width="16" height="16" viewBox="0 0 16 16" aria-hidden="true"><circle cx="8" cy="8" r="7" fill="#f3f4f6" stroke="#666c75" /><path d="M4.500 8h7M8 4.500v7" stroke="#555" strokeWidth="2" /></svg>
        </button>
      </div>
    </div>
  );
}

function TaskButton({ label, state, children }: { label: string; state: 'plain' | 'open' | 'active'; children: ReactNode }) {
  const look = {
    plain: 'border-transparent',
    open: 'border-[#b9def2] bg-linear-to-br from-[#a5d2ec]/80 via-[#58aad9]/60 to-[#68b4de]/70 shadow-[0_0_0_1px_#174a70]',
    active: 'border-[#d9effa] bg-linear-to-br from-[#e5f3fb] via-[#9acbe8] to-[#b7dcf1] shadow-[0_0_0_1px_#174a70]',
  }[state];
  return (
    <button aria-label={label} className={`flex h-[37px] w-[58px] shrink-0 items-center justify-center rounded-sm border ${look}`}>
      {children}
    </button>
  );
}

function OfficeIcon({ color, pale, glyph }: { color: string; pale: string; glyph: string }) {
  return (
    <svg width="30" height="30" viewBox="0 0 30 30" aria-hidden="true">
      <path d="M6 1h23v28H1V6z" fill="#fff" stroke={color} strokeWidth="1.500" />
      <path d="M8 3h19v14H8z" fill={pale} />
      <path d="M16 15l14 2-1.500 11.500-16-3z" fill="#fff" stroke={pale} strokeWidth=".7" />
      <path d="M21 18.500l7 1M20 21l7.500 1.200M17 23l10 2M15.500 25l9 1.700" stroke={color} strokeWidth=".8" />
      <path d={glyph} fill={color} />
    </svg>
  );
}

function Taskbar() {
  return (
    <footer className="relative flex h-[39px] shrink-0 items-center overflow-hidden border-t border-[#1b3f5e] bg-[linear-gradient(90deg,#1d5f96_0,#3795cb_10%,#3f9fd4_30%,#2a83c4_50%,#2173b9_65%,#1c62ab_80%,#14458a_86%,#0e3564_100%)]">
      <svg className="absolute left-[880px] top-0" width="120" height="39" viewBox="0 0 120 39" aria-hidden="true">
        <path d="M20 -2Q70 6 102 42" fill="none" stroke="#8cc6f2" strokeOpacity=".25" strokeWidth="14" />
        <path d="M20 -2Q70 6 102 42" fill="none" stroke="#8cc6f2" strokeOpacity=".75" strokeWidth="7" />
      </svg>
      <button aria-label="Start" className="flex w-[54px] shrink-0 justify-center">
        <svg width="37" height="37" viewBox="0 0 37 37" aria-hidden="true">
          <defs>
            <radialGradient id="orb" cx=".5" cy=".9" r=".9"><stop offset="0" stopColor="#3fd0f5" /><stop offset=".4" stopColor="#2572b0" /><stop offset="1" stopColor="#8aa6bf" /></radialGradient>
          </defs>
          <circle cx="18.500" cy="18.500" r="17.500" fill="url(#orb)" stroke="#163c61" />
          <path d="M10 10q4-2.500 8 0l-1.500 8q-4-2-8 .3z" fill="#f0622d" />
          <path d="M19.500 11q4 2 9-.5l-2 8q-4.500 2-8.500 0z" fill="#8cc83f" />
          <path d="M8 20q4-2.500 8-.2l-1.500 7.500q-4-2-8 .2z" fill="#4d9ce8" />
          <path d="M17.500 20.500q4 2 8.500 0L24 28q-4 2-8 0z" fill="#fbc82d" />
        </svg>
      </button>
      <div className="ml-1.5 flex gap-1">
        <TaskButton label="File Explorer" state="open">
          <svg width="34" height="29" viewBox="0 0 34 29" aria-hidden="true">
            <path d="M2 4l2-3h8l2 2h16l2 4v20H2z" fill="#f1d67e" stroke="#c99f3f" />
            <path d="M4 5h10M15 5h8M24 6h6" stroke="#fff" strokeWidth="2" />
            <path d="M5 2h4" stroke="#36a043" strokeWidth="2" /><path d="M14 3h3" stroke="#d8432e" strokeWidth="2" /><path d="M24 4h3" stroke="#2f6fd0" strokeWidth="2" />
            <path d="M2 8h30l-1 19H3z" fill="#fbe9a6" />
            <path d="M6 28v-9q0-2 2-2h17q2 0 2 2v9h-5v-6H11v6z" fill="#a9d4f0" stroke="#6ba7d0" />
          </svg>
        </TaskButton>
        <TaskButton label="Internet Explorer" state="plain">
          <svg width="34" height="32" viewBox="0 0 34 32" aria-hidden="true">
            <ellipse cx="17" cy="15.500" rx="18" ry="7" transform="rotate(-46 17 15.500)" fill="none" stroke="#e3a92c" strokeWidth="2.200" />
            <path d="M28.500 18.500H12.500q1.500 5 6 5 3 0 4.500-2.500h5q-2.500 7-10 7.500Q7.500 28 7 17 7.500 5.500 18 5q11 .5 10.500 13.500zM12.500 14h10.500q-.5-4.500-5.200-4.500-4.300 0-5.300 4.500z" fill="#1c68b8" stroke="#0d3f80" strokeWidth=".8" />
            <path d="M9.500 11.500q3-5 9-5 5 .3 7 4" fill="none" stroke="#7cc3f3" strokeWidth="1.300" />
            <path d="M3.500 26Q5 16 13 8.500 22 1.500 28 1.500" fill="none" stroke="#f6c84c" strokeWidth="2" />
          </svg>
        </TaskButton>
        <TaskButton label="Google Chrome" state="open">
          <svg width="32" height="32" viewBox="0 0 32 32" aria-hidden="true">
            <path d="M16 8h13.900a16 16 0 0 1-13.900 24l7-12z" fill="#fbc116" />
            <path d="M2.100 8A16 16 0 0 1 29.900 8H16l-7 12z" fill="#e33b2e" />
            <path d="M2.100 8L9 20l7 4h7L16 32A16 16 0 0 1 2.100 8z" fill="#229a4a" />
            <circle cx="16" cy="16" r="8" fill="#fff" /><circle cx="16" cy="16" r="6.300" fill="#3d7ee8" />
          </svg>
        </TaskButton>
        <TaskButton label="Media Player" state="open">
          <svg width="30" height="28" viewBox="0 0 30 28" aria-hidden="true">
            <path d="M11 2h16v22l-16 3z" fill="#a9cbe6" stroke="#5b8db8" />
            <path d="M3 3h19v22H3z" fill="#c2dcf0" stroke="#5b8db8" />
            <circle cx="11" cy="14" r="9" fill="#f58a2d" stroke="#d9681a" />
            <path d="M8 9l8 5-8 5z" fill="#fff" />
          </svg>
        </TaskButton>
        <TaskButton label="AutoCAD" state="plain">
          <svg width="32" height="32" viewBox="0 0 32 32" aria-hidden="true">
            <rect width="32" height="32" fill="#f7e9e3" />
            <path d="M5 27L13 4h6l8 23h-5l-2-6h-8l-2 6zM16 9l-3 9h6z" fill="#c62a20" />
            <path d="M5 27l6-4 9-2 7 6-7-3-9 1z" fill="#7f1712" />
          </svg>
        </TaskButton>
        <TaskButton label="PowerPoint" state="open">
          <OfficeIcon color="#d9481f" pale="#f6b58a" glyph="M5 5h8q6 1 5.500 6-1 5-7.500 5v5l-5 1zM11 8.500v4.500q3 0 3-2.200T11 8.500z" />
        </TaskButton>
        <TaskButton label="Acrobat Reader" state="open">
          <svg width="28" height="27" viewBox="0 0 28 27" aria-hidden="true">
            <rect width="28" height="27" fill="#fbfbfb" />
            <path d="M12 5q2-2 2 1-1 8-7 16-3 2-1-1 6-6 16-4 4 1 1 2-6 0-10-9-2-4-1-5z" fill="none" stroke="#d9201a" strokeWidth="1.600" />
          </svg>
        </TaskButton>
        <TaskButton label="Excel" state="active">
          <OfficeIcon color="#27893b" pale="#a5d6a0" glyph="M4 5h5l3 5 3-5h5l-5.500 8 5 8h-5l-3-5-3 5H3.500l6-8z" />
        </TaskButton>
      </div>
      <div className="ml-auto flex h-full shrink-0 items-center text-white">
        <span className="mb-1 w-[26px]">EN</span>
        <button aria-label="Hidden icons" className="mr-3.5 mt-1"><svg width="8" height="4" aria-hidden="true"><path d="M0 4l4-4 4 4z" fill="#fff" /></svg></button>
        <button aria-label="Network" className="mr-2.5"><svg width="15" height="12" viewBox="0 0 15 12" aria-hidden="true"><path d="M0 10h2v2H0zM3 8h2v4H3zM6 6h2v6H6zM9 3h2v9H9zM12 0h2.500v12H12z" fill="#fff" /></svg></button>
        <button aria-label="Action center" className="mr-2">
          <svg width="15" height="15" viewBox="0 0 15 15" aria-hidden="true"><path d="M.8 0v14" stroke="#fff" strokeWidth="1.500" /><path d="M3 1h5l1 2h5v6H3z" fill="#fff" /><circle cx="10" cy="10" r="4.500" fill="#d9301f" stroke="#fff" strokeWidth=".6" /><path d="M8 8l4 4M12 8l-4 4" stroke="#fff" strokeWidth="1.400" /></svg>
        </button>
        <button aria-label="Power" className="mr-4">
          <svg width="15" height="15" viewBox="0 0 15 15" aria-hidden="true"><path d="M1 3h7v11H1z" fill="#222" stroke="#fff" /><path d="M8 4h6v4q-1 2-3 2v4M10 1v3M13 1v3" fill="none" stroke="#fff" strokeWidth="1.600" /><path d="M1 6l7 7M8 6l-7 7" stroke="#ee1c1c" strokeWidth="2" /></svg>
        </button>
        <time className="w-[60px] text-center leading-[17px]">3:44 PM<br />11/24/2024</time>
        <button aria-label="Show desktop" className="ml-[7px] h-full w-3.5 border border-[#6f93b8] bg-linear-to-br from-[#6c8fb5] to-[#123a6b]" />
      </div>
    </footer>
  );
}

function Watermark() {
  return (
    <div className="pointer-events-none absolute bottom-[17px] left-[600px] z-20 flex flex-col items-center opacity-45" aria-hidden="true">
      <svg width="166" height="48" viewBox="0 0 166 48">
        <g fill="none" stroke="#b0b3b8" strokeWidth="8" strokeLinecap="round" strokeLinejoin="round">
          <path d="M18 21C8 21 5 27 5 33C5 40 10 43 18 43H150M28.500 6V38" />
          <circle cx="56" cy="30" r="11.500" />
          <path d="M85 27v13M100 27v13M114 25l-3 15M126 25l-3 15" />
          <circle cx="149" cy="31" r="11.500" />
        </g>
        <g fill="#b0b3b8"><circle cx="50" cy="5" r="4.500" /><circle cx="62" cy="5" r="4.500" /><circle cx="79" cy="15" r="4.500" /><circle cx="91" cy="15" r="4.500" /></g>
      </svg>
      <span className="font-['Liberation_Sans',sans-serif] text-[27px] font-bold leading-6 text-[#b8d2e8]">mostaql.com</span>
    </div>
  );
}

export default function App() {
  return (
    <div className={`relative flex h-screen flex-col overflow-hidden bg-[#dfe3e8] text-[11px] ${UI}`}>
      <Header />
      <Ribbon />
      <FormulaBar />
      <Sheet />
      <SheetTabs />
      <StatusBar />
      <Taskbar />
      <Watermark />
    </div>
  );
}
